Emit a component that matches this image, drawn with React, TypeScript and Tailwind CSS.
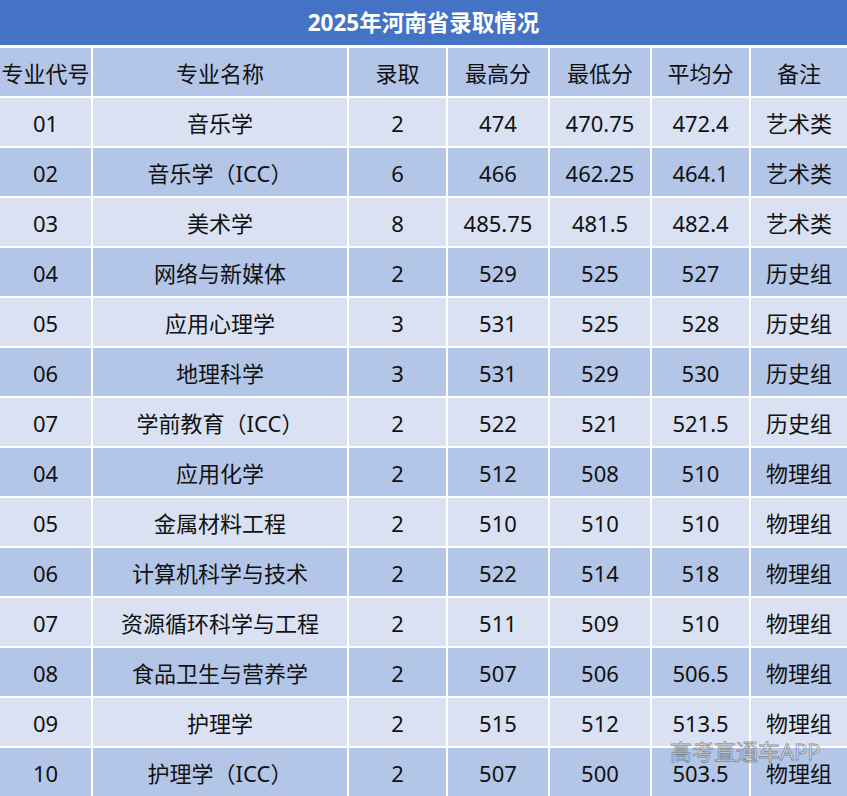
const headers = ["专业代号", "专业名称", "录取", "最高分", "最低分", "平均分", "备注"];

const rows: string[][] = [
  ["01", "音乐学", "2", "474", "470.75", "472.4", "艺术类"],
  ["02", "音乐学（ICC）", "6", "466", "462.25", "464.1", "艺术类"],
  ["03", "美术学", "8", "485.75", "481.5", "482.4", "艺术类"],
  ["04", "网络与新媒体", "2", "529", "525", "527", "历史组"],
  ["05", "应用心理学", "3", "531", "525", "528", "历史组"],
  ["06", "地理科学", "3", "531", "529", "530", "历史组"],
  ["07", "学前教育（ICC）", "2", "522", "521", "521.5", "历史组"],
  ["04", "应用化学", "2", "512", "508", "510", "物理组"],
  ["05", "金属材料工程", "2", "510", "510", "510", "物理组"],
  ["06", "计算机科学与技术", "2", "522", "514", "518", "物理组"],
  ["07", "资源循环科学与工程", "2", "511", "509", "510", "物理组"],
  ["08", "食品卫生与营养学", "2", "507", "506", "506.5", "物理组"],
  ["09", "护理学", "2", "515", "512", "513.5", "物理组"],
  ["10", "护理学（ICC）", "2", "507", "500", "503.5", "物理组"],
];

const grid = "grid grid-cols-[91px_254px_97px_100px_100px_97px_96px] gap-x-[2px]";

export default function App() {
  return (
    <div
      className="relative w-[847px] h-[796px] overflow-hidden bg-white text-[#111]"
      style={{ fontFamily: '"Noto Sans", "Noto Sans CJK SC", sans-serif' }}
    >
      {/* Title */}
      <div className="h-[45px] bg-[#4472C4] flex items-center justify-center text-white text-[22.5px] font-bold">
        2025年河南省录取情况
      </div>

      <div className="mt-[3px] flex flex-col gap-y-[2px]">
        <div className={grid}>
          {headers.map((h) => (
            <div key={h} className="h-[48px] pt-[2px] bg-[#B4C6E7] flex items-center justify-center text-[22px]">
              {h}
            </div>
          ))}
        </div>
        {rows.map((r, i) => (
          <div key={i} className={grid}>
            {r.map((c, j) => (
              <div
                key={j}
                className={`h-[48px] pt-[2px] flex items-center justify-center text-[22px] ${i % 2 === 0 ? "bg-[#D9E1F2]" : "bg-[#B4C6E7]"}`}
              >
                {c}
              </div>
            ))}
          </div>
        ))}
      </div>

      {/* Watermark */}
      <div className="absolute left-[670px] top-[740px] text-[22px] leading-none text-white/50 [-webkit-text-stroke:0.8px_rgba(80,80,80,0.6)]">
        高考直通车APP
      </div>
    </div>
  );
}
